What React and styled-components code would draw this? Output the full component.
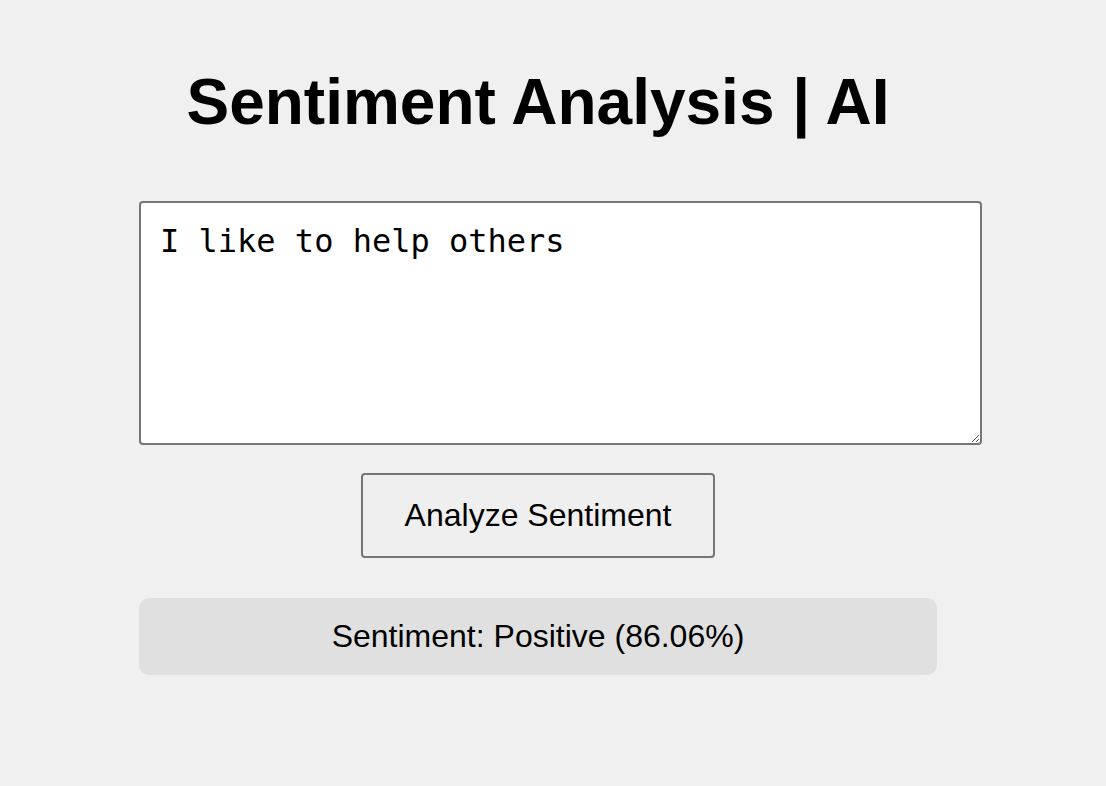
import React from 'react'
import styled, { createGlobalStyle } from 'styled-components'

const Global = createGlobalStyle`
  html, body {
    margin: 0;
    padding: 0;
    background-color: #f0f0f0;
    font-family: "Liberation Sans", Arial, sans-serif;
    color: #000;
  }
`

const Page = styled.main`
  display: flex;
  flex-direction: column;
  align-items: center;
  width: 798px;
  padding: 65px 0 0 139px;
`
const Title = styled.h1`
  margin: 0 0 62px;
  font-size: 64px;
  font-weight: 700;
  line-height: normal;
  white-space: nowrap;
`
const Input = styled.textarea`
  align-self: flex-start;
  width: 800px;
  height: 200px;
  padding: 19px 20px 21px 19px;
  margin: 0;
  border: 2px solid #767676;
  border-radius: 4px;
  background: #fff;
  font-family: "DejaVu Sans Mono", "Liberation Mono", monospace;
  font-size: 32px;
  line-height: normal;
  color: #000;
  outline: none;
`
const Button = styled.button`
  margin-top: 28px;
  padding: 22px 42px;
  border: 2px solid #767676;
  border-radius: 4px;
  background-color: #efefef;
  font-family: "Liberation Sans", Arial, sans-serif;
  font-size: 32px;
  line-height: normal;
  color: #000;
  cursor: pointer;
`
const Result = styled.div`
  align-self: stretch;
  margin-top: 40px;
  padding: 20px 0;
  border-radius: 10px;
  background-color: #e0e0e0;
  text-align: center;
  font-size: 32px;
  line-height: normal;
`

export default function App() {
  return (
    <>
      <Global />
      <Page>
        <Title>Sentiment Analysis | AI</Title>
        <Input defaultValue="I like to help others" spellCheck={false} />
        <Button>Analyze Sentiment</Button>
        <Result>Sentiment: Positive (86.06%)</Result>
      </Page>
    </>
  )
}
